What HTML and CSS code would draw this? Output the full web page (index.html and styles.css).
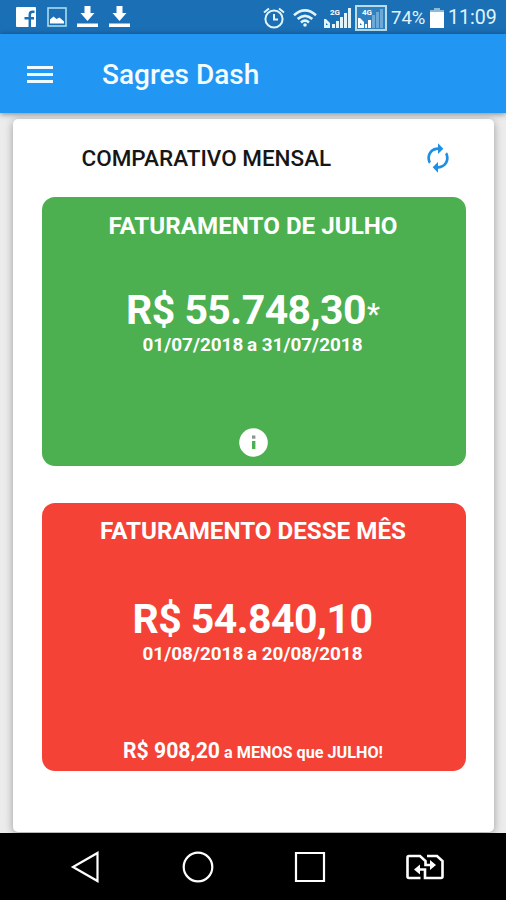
FILE: index.html
```html
<!DOCTYPE html>
<html lang="pt-BR">
<head>
<meta charset="utf-8">
<title>Sagres Dash</title>
<link rel="stylesheet" href="styles.css">
</head>
<body>
<div class="screen">
  <div class="status">
    <div class="notifications">
      <svg width="20" height="20" viewBox="0 0 20 20"><path fill="#fff" d="M1 0h18q1 0 1 1v18q0 1-1 1H1q-1 0-1-1V1q0-1 1-1z"/><path d="M18.500 4.700h-2q-2.700 0-2.700 2.800V20M8.500 11.300h9.500" fill="none" stroke="#1b6fb5" stroke-width="2.500"/></svg>
      <svg width="20" height="20" viewBox="0 0 20 20"><rect x="1" y="1" width="18" height="18" fill="none" stroke="#a8dcf2" stroke-width="1.600"/><path d="M3 16.500v-4l3.500-3 3 2.500 3-1.500 4.500 4v2z" fill="#fff"/></svg>
      <svg width="21" height="21" viewBox="0 0 21 21"><path d="M7.500 0h6v7h4l-7 8-7-8h4zM0 17.500h21V21H0z" fill="#fff"/></svg>
      <svg width="21" height="21" viewBox="0 0 21 21"><path d="M7.500 0h6v7h4l-7 8-7-8h4zM0 17.500h21V21H0z" fill="#fff"/></svg>
    </div>
    <div class="indicators">
      <svg class="alarm" width="22" height="22" viewBox="0 0 22 22" fill="none" stroke="#e0f4fa" stroke-width="2"><circle cx="11" cy="12" r="8.600"/><path d="M11 7v5.500h4M1 5.500L6 1.500M21 5.500l-5-4"/></svg>
      <svg class="wifi" width="24" height="18" viewBox="0 0 24 18"><g fill="none" stroke="#e0f4fa" stroke-width="2.600"><path d="M1 6.200q11-9.500 22 0M4.700 10q7.300-6.300 14.600 0M8 13.400q4-3.400 8 0"/></g><circle cx="12" cy="16" r="1.800" fill="#e0f4fa"/></svg>
      <svg class="signal" width="27" height="22" viewBox="0 0 27 22"><path d="M0 12h2l4 4v5H0zM8 17h3v4H8zM12 14h3v7h-3zM16 10h3v11h-3zM20 6h3v15h-3zM24 1h3v20h-3z" fill="#e0f4fa"/><path d="M2 16l2 2H2z" fill="#1b6fb5"/><text class="network" x="6" y="8">2G</text></svg>
      <svg class="signal-box" width="32" height="26" viewBox="0 0 32 26"><rect x="1" y="1" width="30" height="24" fill="#2f80c0" stroke="#b9dce9" stroke-width="2"/><path d="M17 10h3v13h-3zM21 7h3v16h-3zM25 4h3v19h-3z" fill="#6ba9d8"/><path d="M3 13h2l4 4v6H3zM10 19h2v4h-2zM13 15h3v8h-3z" fill="#fff"/><path d="M5 18l2 2H5z" fill="#1b6fb5"/><text class="network" x="7" y="10">4G</text></svg>
      <span class="percent">74%</span>
      <svg class="battery" width="14" height="20" viewBox="0 0 14 20"><path d="M4 0h6v2h4v3H0V2h4z" fill="#8dbbd5"/><path d="M0 4h14v16H0z" fill="#fff"/></svg>
      <span class="clock">11:09</span>
    </div>
  </div>
  <header class="appbar">
    <div class="menu"><i></i><i></i><i></i></div>
    <h1>Sagres Dash</h1>
  </header>
  <main class="content">
    <section class="card">
      <div class="card-head">
        <h2>COMPARATIVO MENSAL</h2>
        <svg class="refresh" width="32" height="32" viewBox="0 0 24 24"><path fill="#1e90e4" d="M12 6v3l4-4-4-4v3c-4.420 0-8 3.580-8 8 0 1.570.46 3.030 1.240 4.260L6.700 14.800c-.45-.83-.7-1.790-.7-2.800 0-3.310 2.690-6 6-6zm6.760 1.740L17.300 9.200c.44.84.7 1.790.7 2.800 0 3.310-2.690 6-6 6v-3l-4 4 4 4v-3c4.420 0 8-3.580 8-8 0-1.570-.46-3.030-1.240-4.260z"/></svg>
      </div>
      <div class="panel green">
        <h3>FATURAMENTO DE JULHO</h3>
        <p class="amount"><b>R$ 55.748,30</b><small>*</small></p>
        <p class="period">01/07/2018 <span>a</span> 31/07/2018</p>
        <svg class="info" width="29" height="29" viewBox="0 0 29 29"><circle cx="14.500" cy="14.500" r="14.300" fill="#fff"/><path d="M13 13h3.400v8H13z" fill="#4caf50"/><rect x="13" y="7.500" width="3.400" height="3.200" fill="#87988a"/></svg>
      </div>
      <div class="panel red">
        <h3>FATURAMENTO DESSE MÊS</h3>
        <p class="amount"><b>R$ 54.840,10</b></p>
        <p class="period">01/08/2018 <span>a</span> 20/08/2018</p>
        <p class="difference"><b>R$ 908,20</b> <span>a MENOS que JULHO!</span></p>
      </div>
    </section>
  </main>
  <nav class="navbar">
    <svg width="32" height="34" viewBox="0 0 32 34"><path d="M27.500 3v28L3 17z" fill="none" stroke="#fff" stroke-width="2.200"/></svg>
    <svg width="32" height="34" viewBox="0 0 32 34"><circle cx="16" cy="17" r="14.300" fill="none" stroke="#fff" stroke-width="2.200"/></svg>
    <svg width="32" height="34" viewBox="0 0 32 34"><path d="M2 3h28v28H2z" fill="none" stroke="#fff" stroke-width="2.200"/></svg>
    <svg width="40" height="34" viewBox="0 0 40 34"><path d="M15.500 28H4q-1.500 0-1.500-1.500v-19Q2.500 6 4 6h11l5.500 5v4H27M22 6h10l5.500 5v15.500q0 1.500-1.500 1.500H20v-8.500h-7" fill="none" stroke="#fff" stroke-width="2.600"/><path d="M25 10l6 5-6 5zM15 14.500v10L9 19.500z" fill="#fff"/></svg>
  </nav>
</div>
</body>
</html>
```
FILE: styles.css
```css
* { box-sizing: border-box; }
body, h1, h2, h3, p { margin: 0; }
body { font-family: Roboto, "Liberation Sans", sans-serif; }
b { font-weight: 700; }
svg { display: block; flex: none; }
.screen { width: 506px; height: 900px; display: flex; flex-direction: column; overflow: hidden; background: #ececec; }
.status { height: 34px; flex: none; background: #1b6fb5; display: flex; justify-content: space-between; padding: 0 9px 0 16px; color: #e0f4fa; }
.notifications { display: flex; align-items: flex-end; gap: 10.500px; padding-bottom: 7px; }
.indicators { display: flex; align-items: center; line-height: 34px; white-space: nowrap; padding-top: 1px; }
.wifi { margin-left: 8px; }
.signal { margin-left: 7px; }
.signal-box { margin-left: 4px; }
.network { font: 700 8px Roboto, sans-serif; fill: #fff; }
.percent { width: 35px; margin-left: 4px; font-size: 18.500px; }
.battery { margin-left: 4px; }
.clock { width: 49px; margin-left: 4px; font-size: 19.600px; padding-top: 1px; }
.appbar { height: 79px; flex: none; display: flex; align-items: center; background: #2196f3; padding: 2px 0 0 27px; color: #f4fcff; box-shadow: 0 1px 6px rgba(0, 0, 0, .45); z-index: 1; }
.menu { width: 26px; display: grid; gap: 4px; }
.menu i { height: 3px; background: #effaff; }
.appbar h1 { margin-left: 49px; font-size: 28px; line-height: 34px; font-weight: 500; white-space: nowrap; }
.content { height: 720px; flex: none; padding: 6px 12px 1px 13px; }
.card { height: 713px; border-radius: 5px; background: #fff; padding: 0 28.500px; box-shadow: 0 2px 8px rgba(0, 0, 0, .35); }
.card-head { height: 78px; display: flex; align-items: center; padding: 0 12px 0 40px; justify-content: space-between; }
.card-head h2 { font-size: 22.500px; font-weight: 500; color: #161616; white-space: nowrap; }
.panel { height: 268.500px; border-radius: 13px; color: #fff; display: flex; flex-direction: column; align-items: center; padding-right: 1px; white-space: nowrap; font-weight: 700; }
.green { background: #4caf50; }
.red { background: #f44336; margin-top: 37px; }
.panel h3 { font-size: 24.200px; line-height: 30px; margin-top: 14px; font-weight: 700; }
.red h3 { margin-top: 13px; }
.amount { margin-top: 45px; height: 48px; line-height: 48px; }
.red .amount { margin-top: 49px; }
.amount b { font-size: 41px; letter-spacing: -.55px; }
.amount small { font-size: 29px; line-height: 1; font-weight: 500; margin-left: 1px; }
.red .amount, .period { padding-right: 1px; }
.period { font-size: 18.900px; line-height: 22px; }
.period span { margin-left: -1px; }
.info { margin-top: auto; margin-bottom: 9px; }
.difference { margin-top: auto; margin-bottom: 5px; line-height: 26px; font-size: 16.200px; }
.difference b { font-size: 21.200px; }
.navbar { height: 67px; flex: none; background: #000; display: flex; align-items: center; padding-left: 70px; gap: 80px; z-index: 2; }
.navbar svg:last-child { margin-left: -1px; }
```
